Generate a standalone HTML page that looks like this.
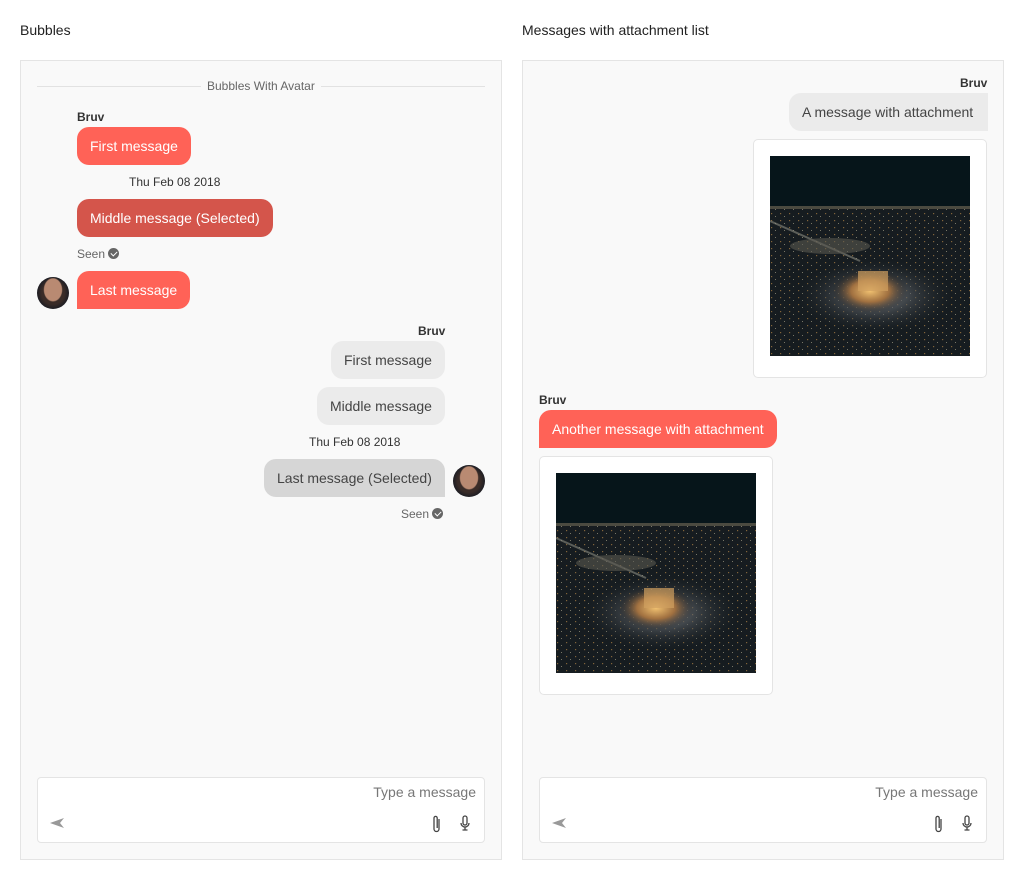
<!DOCTYPE html>
<html><head><meta charset="utf-8"><style>
*{box-sizing:border-box;margin:0;padding:0}
body{width:1024px;height:880px;background:#fff;font-family:"Liberation Sans",sans-serif;position:relative;overflow:hidden;color:#333}
.abs{position:absolute}
.title{font-size:14px;color:#222;top:22px}
.panel{top:60px;width:482px;height:800px;background:#f9f9f9;border:1px solid #e4e4e4}
.b{position:absolute;height:38px;line-height:38px;font-size:14px;padding:0 13px;border-radius:12px;white-space:nowrap}
.red{background:#ff6257;color:#fff}
.sel{background:#d4554b;color:#fff}
.grey{background:#ebebeb;color:#444}
.gsel{background:#d6d6d6;color:#444}
.name{position:absolute;font-size:12px;font-weight:bold;color:#333}
.small{position:absolute;font-size:12px;color:#333}
.seen{position:absolute;font-size:12px;color:#666}
.chk{display:inline-block;width:11px;height:11px;border-radius:50%;background:#666;vertical-align:-1px;margin-left:3px;position:relative}
.chk:after{content:"";position:absolute;left:3.5px;top:2px;width:3px;height:5px;border:solid #fff;border-width:0 1.5px 1.5px 0;transform:rotate(45deg)}
.av{position:absolute;width:32px;height:32px;border-radius:50%;background:radial-gradient(ellipse 30% 38% at 50% 40%,#b98a72 0 90%,transparent 100%),radial-gradient(circle at 50% 50%,#3a2c28 0 50%,#1e1e24 70%)}
.input{position:absolute;width:448px;height:66px;background:#fff;border:1px solid #e4e4e4;border-radius:4px}
.input .ph{position:absolute;right:8px;top:6px;font-size:14px;color:#777}
.card{position:absolute;width:234px;height:239px;background:#fff;border:1px solid #e4e4e4;border-radius:5px}
.card svg{position:absolute;left:16px;top:16px}
</style></head><body>
<div class="abs title" style="left:20px">Bubbles</div>
<div class="abs title" style="left:522px">Messages with attachment list</div>

<div class="abs panel" style="left:20px">
  <div class="abs" style="left:16px;top:25px;width:448px;height:1px;background:#e2e2e2"></div>
  <div class="abs" style="left:180px;top:18px;padding:0 6px;background:#f9f9f9;font-size:12px;color:#666">Bubbles With Avatar</div>
  <div class="name" style="left:56px;top:49px">Bruv</div>
  <div class="b red" style="left:56px;top:66px">First message</div>
  <div class="small" style="left:108px;top:114px">Thu Feb 08 2018</div>
  <div class="b sel" style="left:56px;top:138px">Middle message (Selected)</div>
  <div class="seen" style="left:56px;top:186px">Seen<span class="chk"></span></div>
  <div class="av" style="left:16px;top:216px"></div>
  <div class="b red" style="left:56px;top:210px;border-bottom-left-radius:0">Last message</div>

  <div class="name" style="left:397px;top:263px">Bruv</div>
  <div class="b grey" style="left:310px;top:280px">First message</div>
  <div class="b grey" style="left:296px;top:326px">Middle message</div>
  <div class="small" style="left:288px;top:374px">Thu Feb 08 2018</div>
  <div class="b gsel" style="left:243px;top:398px;border-bottom-right-radius:0">Last message (Selected)</div>
  <div class="av" style="left:432px;top:404px"></div>
  <div class="seen" style="left:380px;top:446px">Seen<span class="chk"></span></div>

  <div class="input" style="left:16px;top:716px">
    <div class="ph">Type a message</div>
    <svg class="abs" style="left:10px;top:38px" width="18" height="16" viewBox="0 0 18 16"><path d="M16 2 L2 7 L16 12 L12 7 Z" fill="#999"/></svg>
    <svg class="abs" style="left:392px;top:36px" width="14" height="20" viewBox="0 0 14 20"><path d="M9 5 V15 a2.5 2.5 0 0 1 -5 0 V4 a1.6 1.6 0 0 1 3.2 0 V14" fill="none" stroke="#444" stroke-width="1.3"/></svg>
    <svg class="abs" style="left:420px;top:36px" width="14" height="20" viewBox="0 0 14 20"><rect x="5" y="2" width="4" height="9" rx="2" fill="none" stroke="#444" stroke-width="1.3"/><path d="M3 9 a4 4 0 0 0 8 0 M7 13 V16 M4.5 16 H9.5" fill="none" stroke="#444" stroke-width="1.3"/></svg>
  </div>
</div>

<div class="abs panel" style="left:522px">
  <div class="name" style="left:437px;top:15px">Bruv</div>
  <div class="b grey" style="left:266px;top:32px;border-top-right-radius:0;border-bottom-right-radius:0;padding:0 13px;width:199px">A message with attachment</div>
  <div class="card" style="left:230px;top:78px"><svg width="200" height="200"><use href="#img"/></svg></div>
  <div class="name" style="left:16px;top:332px">Bruv</div>
  <div class="b red" style="left:16px;top:349px;border-bottom-left-radius:0">Another message with attachment</div>
  <div class="card" style="left:16px;top:395px"><svg width="200" height="200"><use href="#img"/></svg></div>

  <div class="input" style="left:16px;top:716px">
    <div class="ph">Type a message</div>
    <svg class="abs" style="left:10px;top:38px" width="18" height="16" viewBox="0 0 18 16"><path d="M16 2 L2 7 L16 12 L12 7 Z" fill="#999"/></svg>
    <svg class="abs" style="left:392px;top:36px" width="14" height="20" viewBox="0 0 14 20"><path d="M9 5 V15 a2.5 2.5 0 0 1 -5 0 V4 a1.6 1.6 0 0 1 3.2 0 V14" fill="none" stroke="#444" stroke-width="1.3"/></svg>
    <svg class="abs" style="left:420px;top:36px" width="14" height="20" viewBox="0 0 14 20"><rect x="5" y="2" width="4" height="9" rx="2" fill="none" stroke="#444" stroke-width="1.3"/><path d="M3 9 a4 4 0 0 0 8 0 M7 13 V16 M4.5 16 H9.5" fill="none" stroke="#444" stroke-width="1.3"/></svg>
  </div>
</div>

<svg width="0" height="0" style="position:absolute"><defs>
<radialGradient id="glow" cx="0.5" cy="0.5" r="0.5"><stop offset="0" stop-color="#f0c070"/><stop offset="0.5" stop-color="#a07040"/><stop offset="1" stop-color="#1a1a1a" stop-opacity="0"/></radialGradient>
<radialGradient id="snow" cx="0.5" cy="0.5" r="0.5"><stop offset="0" stop-color="#8a8e94"/><stop offset="1" stop-color="#1a2024" stop-opacity="0"/></radialGradient>
<pattern id="lights" width="9" height="7" patternUnits="userSpaceOnUse"><rect x="1" y="1" width="1.2" height="1.2" fill="#d9a050"/><rect x="5" y="4" width="1" height="1" fill="#c8c0a0"/></pattern>
<g id="img">
<rect width="200" height="200" fill="#06151a"/>
<rect y="50" width="200" height="150" fill="#161c20"/>
<rect y="50" width="200" height="150" fill="url(#lights)" opacity="0.55"/>
<rect y="50" width="200" height="3" fill="#4a4a40"/>
<path d="M0 65 L90 105" stroke="#8a8a80" stroke-width="2" opacity="0.6"/>
<ellipse cx="105" cy="140" rx="80" ry="38" fill="url(#snow)"/>
<ellipse cx="60" cy="90" rx="40" ry="8" fill="#5a5850" opacity="0.6"/>
<ellipse cx="100" cy="135" rx="38" ry="22" fill="url(#glow)"/>
<rect x="88" y="115" width="30" height="20" fill="#d0a060" opacity="0.7"/>
</g></defs></svg>
</body></html>
